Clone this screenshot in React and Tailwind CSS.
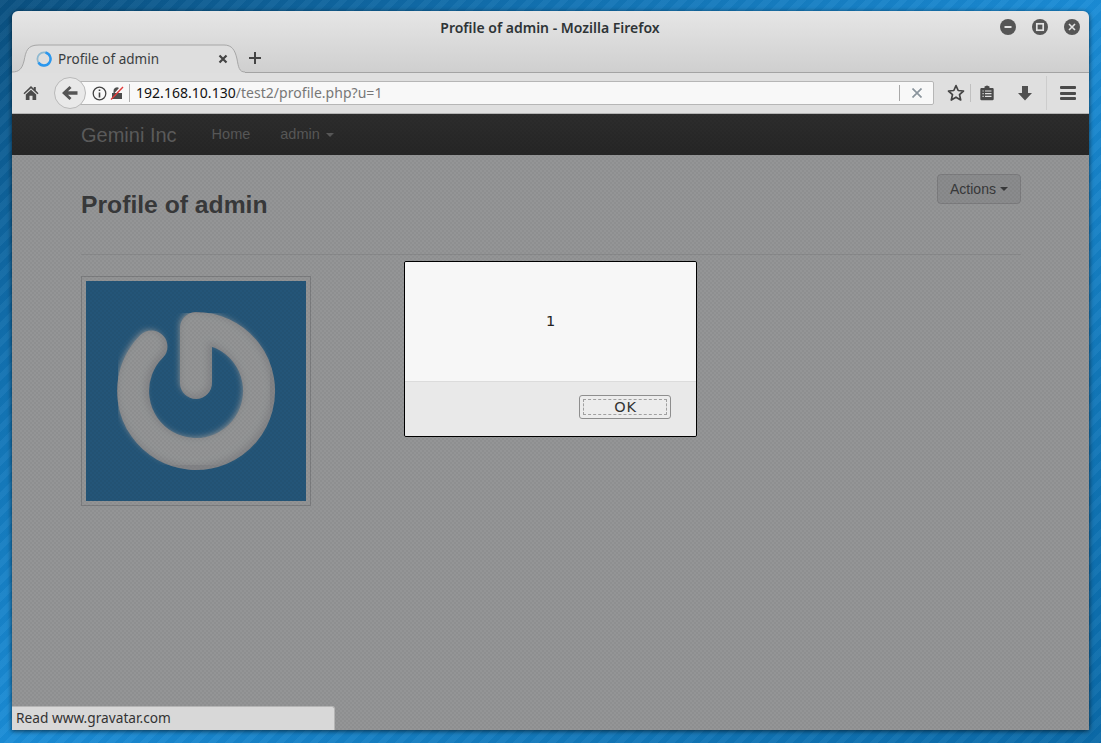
const ui = { fontFamily: '"Noto Sans", sans-serif' };

function Spinner() {
  return (
    <svg width="16" height="16" viewBox="0 0 16 16" className="shrink-0">
      <circle cx="8" cy="8" r="6.6" fill="none" stroke="#8fb9d0" strokeWidth="1.8" />
      <path d="M9.5 1.5A6.6 6.6 0 1 1 2.4 11.5" fill="none" stroke="#2a97ee" strokeWidth="2.4" />
    </svg>
  );
}

function WinButton({ children }) {
  return (
    <div className="w-4 h-4 rounded-full bg-[#565656] flex items-center justify-center">
      <svg width="10" height="10" viewBox="0 0 10 10" fill="none" stroke="#e4e4e4" strokeWidth="1.6">{children}</svg>
    </div>
  );
}

function Avatar() {
  return (
    <div className="w-[230px] h-[230px] border border-[#7b7c7e] p-1 bg-[#939495]">
      <svg width="220" height="220" viewBox="0 0 220 220" className="block">
        <defs>
          <filter id="inner" x="-10%" y="-10%" width="120%" height="120%">
            <feGaussianBlur stdDeviation="3" />
          </filter>
        </defs>
        <rect width="220" height="220" fill="#245578" />
        <g fill="none" strokeLinecap="round" strokeLinejoin="round">
          <path d="M65.5 65.5A63 63 0 1 0 110 47V102" stroke="#828386" strokeWidth="32" />
          <path d="M65.5 65.5A63 63 0 1 0 110 47V102" stroke="#939495" strokeWidth="28" filter="url(#inner)" transform="translate(-2 -2)" />
        </g>
      </svg>
    </div>
  );
}

export default function App() {
  return (
    <div className="w-[1101px] h-[743px] overflow-hidden pt-[11px] pl-3 bg-[repeating-linear-gradient(135deg,rgba(255,255,255,0.04)_0_6px,rgba(0,0,0,0.02)_6px_12px),linear-gradient(to_bottom_right,#0a5080_0%,#1272b2_25%,#1a8cd6_50%,#1278ba_75%,#0b6aa8_100%)]">
      <div className="relative w-[1077px] h-[719px] flex flex-col overflow-hidden rounded-t-[6px] shadow-[0_1px_5px_rgba(0,0,0,0.65)]" style={ui}>
        <div className="h-[62px] shrink-0 flex flex-col bg-[linear-gradient(#e6e6e6,#cfcfcf)] border-b border-[#a3a3a3]">
          <div className="h-[33px] relative flex items-center justify-center pt-[1px] pr-[1px]">
            <span className="text-[14px] font-semibold text-[#2e3436] leading-none">Profile of admin - Mozilla Firefox</span>
            <div className="absolute right-[9px] top-2 flex gap-4">
              <WinButton><path d="M1.5 5H8.5" strokeWidth="2" /></WinButton>
              <WinButton><rect x="1.8" y="1.8" width="6.4" height="6.4" strokeWidth="1.7" /></WinButton>
              <WinButton><path d="M2 2L8 8M8 2L2 8" /></WinButton>
            </div>
          </div>
          <div className="h-[28px] flex items-center">
            <div className="relative w-[233px] h-[29px] flex items-center pl-6 pr-[17px] -mb-px">
              <svg width="233" height="29" viewBox="0 0 233 29" className="absolute left-0 top-0">
                <path d="M0 28C7 28 10 25 12 17C14 7 15 1 27 1H212C220 1 223 6 225 15C226.5 23 227 28 233 28V29H0Z" fill="#dedede" />
                <path d="M0 28C7 28 10 25 12 17C14 7 15 1 27 1H212C220 1 223 6 225 15C226.5 23 227 28 233 28" fill="none" stroke="#a6a6a6" />
              </svg>
              <div className="relative flex items-center w-full">
                <Spinner />
                <span className="ml-[6px] pt-[2px] text-[13.5px] text-[#3a3d3f] leading-none">Profile of admin</span>
                <svg width="10" height="10" viewBox="0 0 10 10" className="ml-auto" stroke="#444" strokeWidth="2.2">
                  <path d="M1.5 1.5L8.5 8.5M8.5 1.5L1.5 8.5" />
                </svg>
              </div>
            </div>
            <svg width="14" height="14" viewBox="0 0 14 14" stroke="#444" strokeWidth="2" className="ml-[3px]">
              <path d="M7 1V13M1 7H13" />
            </svg>
          </div>
        </div>

        <div className="h-[41px] shrink-0 flex items-center bg-[#dfdfdf] border-b border-[#b4b4b4]">
          <svg width="16" height="16" viewBox="0 0 16 16" className="ml-[11px]" fill="#4a4a4a">
            <path d="M8 1L0.5 8.2L1.5 9.2L8 3.2L14.5 9.2L15.5 8.2L12.8 5.6V2H10.8V3.8Z" />
            <path d="M2.8 9.6L8 4.8L13.2 9.6V15H9.5V10.8H6.5V15H2.8Z" />
          </svg>
          <div className="relative z-10 ml-[15px] w-8 h-8 rounded-full bg-[#e9e9e9] border border-[#b9b9b9] flex items-center justify-center shrink-0">
            <svg width="16" height="14" viewBox="0 0 16 14" fill="#555">
              <path d="M7.5 0L0 7L7.5 14L9.5 12L6 8.7H15.5V5.3H6L9.5 2Z" />
            </svg>
          </div>
          <div className="-ml-[14px] w-[862px] h-[24px] shrink-0 flex items-center rounded-[2px] border border-[#b6b6b6] bg-[#f8f8f8] pl-[19px]">
            <svg width="15" height="15" viewBox="0 0 15 15" fill="none" stroke="#444" strokeWidth="1.3" className="shrink-0">
              <circle cx="7.5" cy="7.5" r="6.3" />
              <path d="M7.5 6.5V11.5M7.5 3.5V5" strokeWidth="1.6" />
            </svg>
            <svg width="14" height="14" viewBox="0 0 14 14" className="ml-[3px] shrink-0">
              <path d="M2 7H3.5V5A3.5 3.5 0 0 1 9 2L4.5 7H12V13H2Z" fill="#4d4d4d" />
              <path d="M1 13.5L13 1" stroke="#e03a3a" strokeWidth="1.4" />
            </svg>
            <div className="ml-[5px] w-px h-[18px] bg-[#b0b0b0] shrink-0" />
            <span className="ml-[6px] text-[14px] leading-none text-[#111] tracking-[0.03px]">192.168.10.130<span className="text-[#777]">/test2/profile.php?u=1</span></span>
            <div className="ml-auto w-px h-[16px] bg-[#a8a8a8] shrink-0" />
            <svg width="10" height="10" viewBox="0 0 10 10" stroke="#8a949c" strokeWidth="1.7" className="ml-3 mr-[11px] shrink-0">
              <path d="M0.5 0.5L9.5 9.5M9.5 0.5L0.5 9.5" />
            </svg>
          </div>
          <svg width="18" height="18" viewBox="0 0 18 18" fill="none" stroke="#444" strokeWidth="1.7" strokeLinejoin="round" className="ml-[13px] shrink-0">
            <path d="M9 1.6L11.2 6.5L16.5 7L12.5 10.6L13.7 16L9 13.2L4.3 16L5.5 10.6L1.5 7L6.8 6.5Z" />
          </svg>
          <div className="ml-[5px] w-px h-[18px] bg-[#c0c0c0]" />
          <svg width="14" height="16" viewBox="0 0 14 16" className="ml-[9px] shrink-0">
            <path d="M1.5 3H4.5V1.5L7 0.5L9.5 1.5V3H12.5A1.2 1.2 0 0 1 13.7 4.2V14A1.2 1.2 0 0 1 12.5 15.2H1.5A1.2 1.2 0 0 1 0.3 14V4.2A1.2 1.2 0 0 1 1.5 3Z" fill="#4a4a4a" />
            <path d="M2.5 6H3.7M5 6H11.5M2.5 8.7H3.7M5 8.7H11.5M2.5 11.4H3.7M5 11.4H11.5" stroke="#e0e0e0" strokeWidth="1.2" />
          </svg>
          <svg width="14" height="15" viewBox="0 0 14 15" fill="#505050" className="ml-[24px] shrink-0">
            <path d="M4 0H10V7H14L7 14.5L0 7H4Z" />
          </svg>
          <div className="ml-[14px] w-px h-[34px] bg-[#cdcdcd]" />
          <div className="ml-[13px] w-4 flex flex-col gap-[2.5px]">
            <div className="h-[3px] bg-[#4a4a4a] rounded-[1px]" />
            <div className="h-[3px] bg-[#4a4a4a] rounded-[1px]" />
            <div className="h-[3px] bg-[#4a4a4a] rounded-[1px]" />
          </div>
        </div>

        <div className="relative flex-1 flex flex-col bg-[#949596]" style={{ fontFamily: '"Liberation Sans", sans-serif' }}>
          <div className="h-[41px] shrink-0 flex items-center pl-[69px] bg-[linear-gradient(#2d2d2d,#262626)]">
            <span className="text-[20px] text-[#5c5c5c]">Gemini Inc</span>
            <span className="ml-[35px] text-[14.5px] text-[#585858]">Home</span>
            <span className="ml-[30px] text-[14.5px] text-[#585858]">admin</span>
            <span className="ml-[6px] border-x-4 border-x-transparent border-t-4 border-t-[#585858]" />
          </div>
          <div className="pl-[69px] w-[1009px]">
            <div className="h-[100px] flex justify-between border-b border-[#88898a] pt-[19px]">
              <h1 className="mt-[16px] text-[24.7px] leading-[30px] font-bold text-[#38393a]">Profile of admin</h1>
              <div className="w-[84px] h-[30px] flex items-center justify-center gap-[4px] rounded-[4px] border border-[#7c7c7e] bg-[#8a8b8d] text-[14px] text-[#38393a]">
                Actions
                <span className="border-x-4 border-x-transparent border-t-4 border-t-[#38393a]" />
              </div>
            </div>
            <div className="mt-[21px]">
              <Avatar />
            </div>
          </div>

          <div className="absolute inset-0 flex justify-center pt-[147px] bg-[repeating-conic-gradient(rgba(0,0,0,0.04)_0_25%,transparent_0_50%)] bg-[length:4px_4px]">
            <div className="w-[293px] h-[176px] flex flex-col border border-black rounded-[2px] overflow-hidden" style={{ fontFamily: '"DejaVu Sans", sans-serif' }}>
              <div className="h-[119px] bg-[#f7f7f7] flex items-center justify-center text-[14.5px] text-[#222]">1</div>
              <div className="flex-1 bg-[#e9e9e9] border-t border-[#dcdcdc] flex justify-end pt-[13px] pr-[25px]">
                <div className="w-[92px] h-[24px] rounded-[3px] border border-[#8e8e8e] bg-[#ececec] p-[3px]">
                  <div className="w-full h-full border border-dashed border-[#a0a0a0] flex items-center justify-center pl-[1px] text-[14.5px] text-[#333] tracking-[0.8px] leading-none">OK</div>
                </div>
              </div>
            </div>
          </div>

          <div className="absolute left-0 bottom-0 w-[323px] h-[24px] flex items-center pl-1 bg-[#d8d8d8] border-t border-r border-[#b5b5b5] rounded-tr-[3px] text-[13.7px] text-[#333]" style={ui}>
            Read www.gravatar.com
          </div>
        </div>
      </div>
    </div>
  );
}
